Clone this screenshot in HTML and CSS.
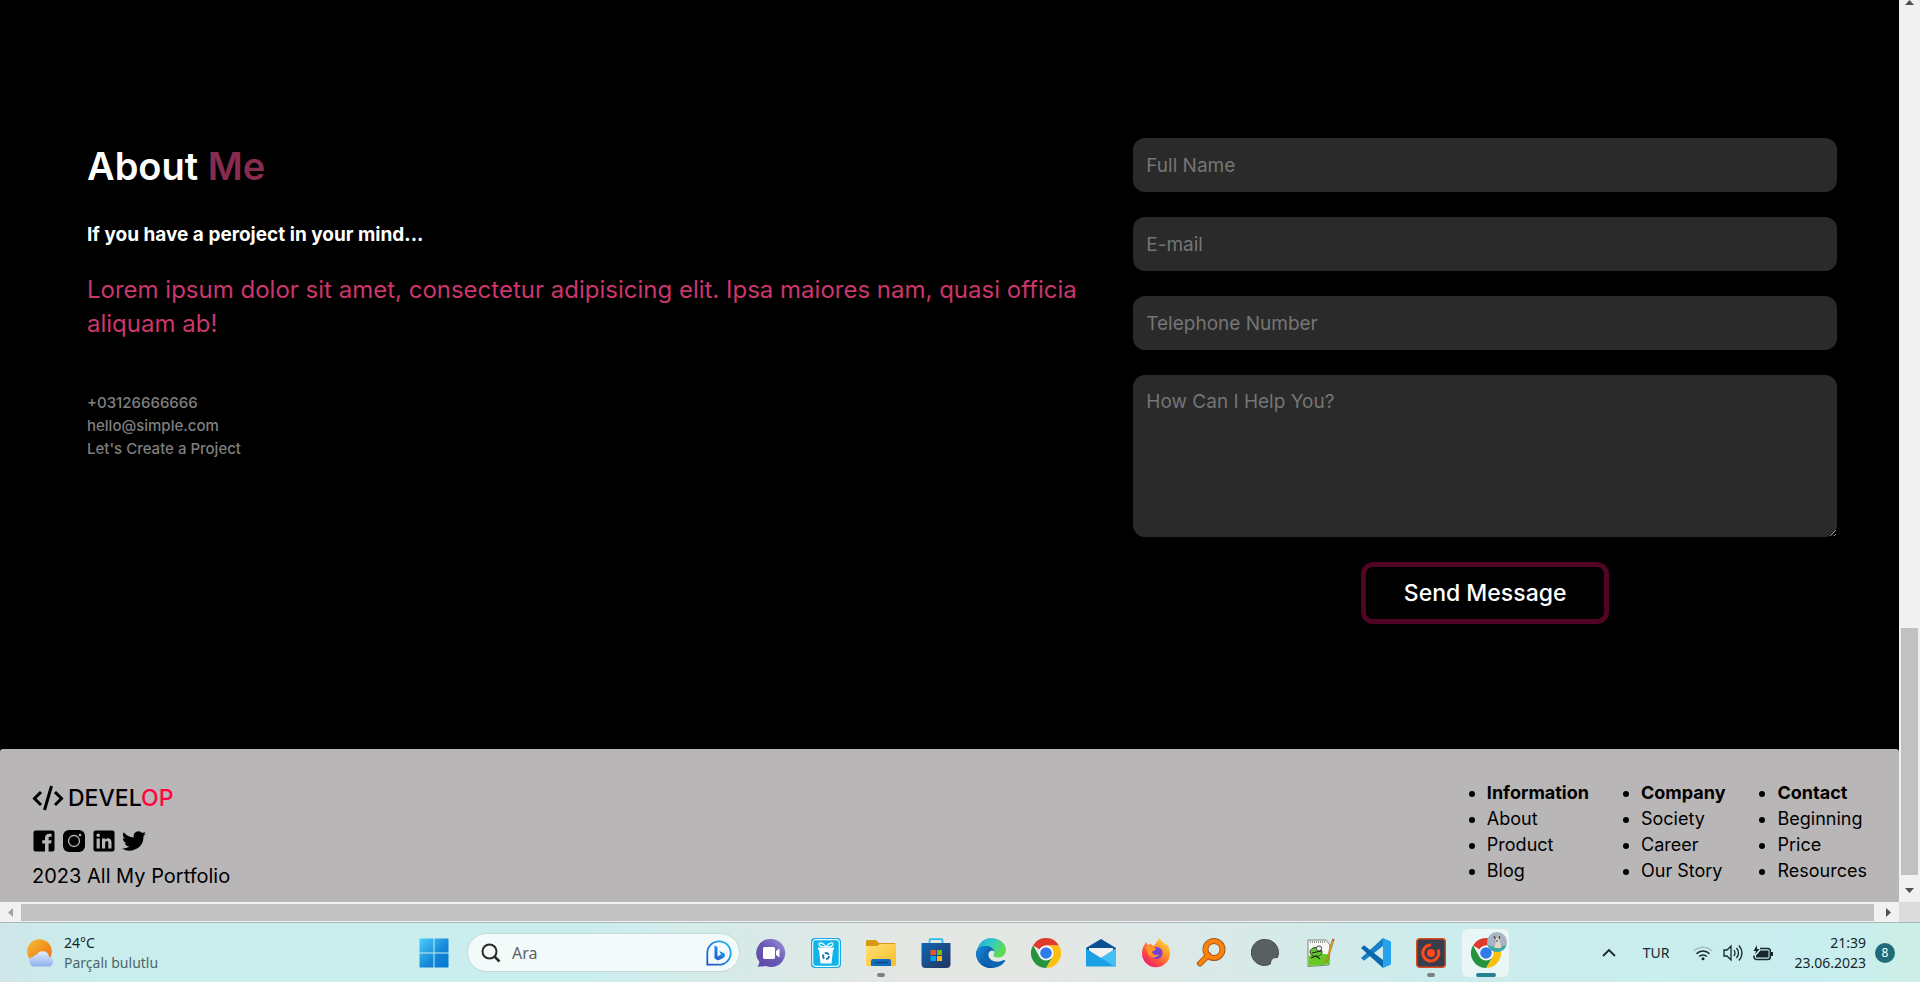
FILE: index.html
```html
<!DOCTYPE html>
<html lang="en">
<head>
<meta charset="utf-8">
<title>Develop Portfolio</title>
<link rel="stylesheet" href="styles.css">
</head>
<body>
<div class="browser">
  <div class="page">
    <main class="contact">
      <section class="about">
        <h1>About <span>Me</span></h1>
        <h2>If you have a peroject in your mind...</h2>
        <p class="lead">Lorem ipsum dolor sit amet, consectetur adipisicing elit. Ipsa maiores nam, quasi officia aliquam ab!</p>
        <div class="details">
          <p>+03126666666</p>
          <p>hello@simple.com</p>
          <p>Let's Create a Project</p>
        </div>
      </section>
      <form class="form">
        <input type="text" placeholder="Full Name" aria-label="Full Name">
        <input type="email" placeholder="E-mail" aria-label="E-mail">
        <input type="tel" placeholder="Telephone Number" aria-label="Telephone Number">
        <textarea placeholder="How Can I Help You?" aria-label="How Can I Help You?"></textarea>
        <button type="button">Send Message</button>
      </form>
    </main>
    <footer class="footer">
      <div class="brand">
        <a class="logo" href="#">
          <svg width="32" height="26" viewBox="0 0 32 26" fill="none" stroke="#000" stroke-width="3"><path d="M9 7 2.500 13.500 9 20M23 7l6.500 6.500L23 20M19.500 1 12.500 25"/></svg>
          <span>DEVEL<b>OP</b></span>
        </a>
        <div class="social">
          <a href="#" aria-label="Facebook"><svg width="24" height="24" viewBox="0 0 24 24"><path fill-rule="evenodd" d="M3.500 1.500h17a2 2 0 0 1 2 2v17a2 2 0 0 1-2 2h-17a2 2 0 0 1-2-2v-17a2 2 0 0 1 2-2Zm9.500 21h3.600v-8h2.500l.5-3.300h-3V9.300c0-1 .4-1.500 1.600-1.500h1.500V4.900c-3.900-.7-6.700.3-6.700 4v2.300h-2.800v3.300H13Z"/></svg></a>
          <a href="#" aria-label="Instagram"><svg width="24" height="24" viewBox="0 0 24 24"><rect x="1" y="1" width="22" height="22" rx="6"/><circle cx="12" cy="12" r="5.500" fill="none" stroke="#b8b6b7" stroke-width="1.300"/><circle cx="18" cy="6" r="1.300" fill="#b8b6b7"/></svg></a>
          <a href="#" aria-label="LinkedIn"><svg width="24" height="24" viewBox="0 0 24 24"><rect x="1.500" y="1.500" width="21" height="21" rx="2"/><g fill="#b8b6b7"><circle cx="6.200" cy="6.200" r="1.800"/><path d="M4.600 9.500h3.200v10H4.600zM10 9.500h3v1.300c2-2.500 6.500-2 6.500 2.600v6.100h-3.200v-5.500c0-2.700-3.100-2.600-3.100 0v5.500H10z"/></g></svg></a>
          <a href="#" aria-label="Twitter"><svg width="24" height="24" viewBox="0 0 24 24"><path d="M24 4.600a10 10 0 0 1-2.800.8 5 5 0 0 0 2.200-2.700 10 10 0 0 1-3.200 1.200 4.900 4.900 0 0 0-8.400 4.500A14 14 0 0 1 1.700 3.200a4.900 4.900 0 0 0 1.500 6.500 4.900 4.900 0 0 1-2.200-.6 4.900 4.900 0 0 0 3.900 4.900 5 5 0 0 1-2.200.1 4.900 4.900 0 0 0 4.600 3.400A9.900 9.900 0 0 1 0 19.500 14 14 0 0 0 21.500 7a10 10 0 0 0 2.500-2.400Z"/></svg></a>
        </div>
        <p>2023 All My Portfolio</p>
      </div>
      <nav class="links">
        <ul><li><strong>Information</strong></li><li>About</li><li>Product</li><li>Blog</li></ul>
        <ul><li><strong>Company</strong></li><li>Society</li><li>Career</li><li>Our Story</li></ul>
        <ul><li><strong>Contact</strong></li><li>Beginning</li><li>Price</li><li>Resources</li></ul>
      </nav>
    </footer>
  </div>
  <div class="vscroll">
    <svg class="up" width="21" height="12" viewBox="0 0 21 12"><path d="M6 5h9l-4.500-5z" fill="#505050"/></svg>
    <div class="thumb"></div>
    <svg class="down" width="21" height="27" viewBox="0 0 21 27"><path d="M6 13h9l-4.500 5z" fill="#505050"/></svg>
  </div>
  <div class="hscroll">
    <svg width="21" height="20" viewBox="0 0 21 20"><path d="M13 6v9l-5-4.500z" fill="#a3a3a3"/></svg>
    <div class="thumb"></div>
    <svg width="25" height="20" viewBox="0 0 25 20"><path d="M12 6v9l5-4.500z" fill="#505050"/></svg>
  </div>
  <div class="corner"></div>
</div>
<div class="taskbar">
  <div class="weather">
    <svg width="28" height="28" viewBox="0 0 28 28"><defs><linearGradient id="sun" x1="0" y1="0" x2="1" y2="1"><stop stop-color="#f5bd30"/><stop offset="1" stop-color="#ee6a12"/></linearGradient><linearGradient id="cloud" x1="0" y1="0" x2="0" y2="1"><stop stop-color="#e2ecfb"/><stop offset="1" stop-color="#8fb0ef"/></linearGradient></defs><circle cx="12.500" cy="12.500" r="12.300" fill="url(#sun)"/><path d="M7 27.500a5 5 0 0 1-.4-9.900 4 4 0 0 1 3.300-2 6.500 6.500 0 0 1 12.200 2.500 5 5 0 0 1 .9 9.400Z" fill="url(#cloud)"/></svg>
    <div><div>24°C</div><div class="dim">Parçalı bulutlu</div></div>
  </div>
  <div class="apps">
    <button class="start" aria-label="Start"><svg width="30" height="30" viewBox="0 0 30 30"><defs><linearGradient id="win" x1="0" y1="0" x2="1" y2="1" ><stop stop-color="#4ed0fc"/><stop offset=".6" stop-color="#1285d6"/><stop offset="1" stop-color="#0078d4"/></linearGradient><mask id="panes"><path fill="#fff" d="M.500.500h14v14H.500zM15.500.500h14v14h-14zM.500 15.500h14v14H.500zM15.500 15.500h14v14h-14z"/></mask></defs><rect width="30" height="30" rx="1.500" fill="url(#win)" mask="url(#panes)"/></svg></button>
    <label class="search">
      <svg width="20" height="20" viewBox="0 0 20 20" fill="none" stroke="#2a2a2a" stroke-width="2"><circle cx="8.500" cy="8.500" r="7"/><path d="m13.500 13.500 5 5" stroke-width="2.500"/></svg>
      <input type="text" placeholder="Ara" aria-label="Ara">
      <svg width="26" height="26" viewBox="0 0 26 26"><defs><linearGradient id="bing" x1="1" y1="0" x2="0" y2="1"><stop stop-color="#22b8f0"/><stop offset="1" stop-color="#2150c8"/></linearGradient></defs><path d="M1.300 24.700V13A11.700 11.700 0 1 1 13 24.700Z" fill="#f3fbff" stroke="url(#bing)" stroke-width="1.800"/><path d="m8.500 5.500 3 1.500v9.500l3.500-2-1.700-3.500 5 2.300c1.500 1.500.8 3.500-1 4.700L12 20.500l-3.500-2.200z" fill="url(#bing)"/></svg>
    </label>
    <button class="app" aria-label="Chat"><svg width="30" height="30" viewBox="0 0 30 30"><defs><linearGradient id="chat" x1="1" y1="0" x2="0" y2="1"><stop stop-color="#a392d8"/><stop offset=".5" stop-color="#6758b4"/><stop offset="1" stop-color="#5c49a8"/></linearGradient></defs><path d="M15 1a14 14 0 1 1-5 27l-8.500.8c1-1.500 1.700-2.800 1.900-5A14 14 0 0 1 15 1Z" fill="url(#chat)"/><rect x="7" y="9" width="12" height="12" rx="1.500" fill="#fff"/><path d="m20 13 3.500-2.500v9L20 17z" fill="#fff"/></svg></button>
    <button class="app" aria-label="Uninstaller"><svg width="30" height="30" viewBox="0 0 30 30"><rect width="30" height="30" rx="4" fill="#18a9e8"/><rect x="1.700" y="1.700" width="26.600" height="26.600" rx="3" fill="#10b4e9" stroke="#e9faff" stroke-width="1.200"/><path d="M7 9.500h16v2.300h-1L20.500 25.500h-11L8 11.800H7z" fill="#fff"/><path d="M15 9C12 4 7 4 8 6.500S12 9 15 9c3 0 6 0 7-2.500S18 4 15 9Z" fill="none" stroke="#fff" stroke-width="1.200"/><circle cx="15" cy="18" r="3" fill="none" stroke="#0f75b5" stroke-width="1.800" stroke-dasharray="4.500 1.800"/></svg></button>
    <button class="app running" aria-label="File Explorer"><svg width="30" height="30" viewBox="0 0 30 30"><defs><linearGradient id="folder" x1="0" y1="0" x2="1" y2="1"><stop stop-color="#ffe07a"/><stop offset="1" stop-color="#f9bd22"/></linearGradient></defs><path d="M0 3.500A1.500 1.500 0 0 1 1.500 2H10l3 3h15a2 2 0 0 1 2 2v8H0z" fill="#d89a10"/><path d="M0 8h11l3-2h16v20.500a1.500 1.500 0 0 1-1.500 1.500h-27A1.500 1.500 0 0 1 0 26.500z" fill="url(#folder)"/><path d="M5 28v-5a2 2 0 0 1 2-2h16a2 2 0 0 1 2 2v5z" fill="#126bbd"/><path d="M9 24.500h13" stroke="#0b4683" stroke-width="1.300"/></svg></button>
    <button class="app" aria-label="Store"><svg width="30" height="30" viewBox="0 0 30 30"><defs><linearGradient id="store" x1="0" y1="0" x2="1" y2="1"><stop stop-color="#0e67b4"/><stop offset="1" stop-color="#24345f"/></linearGradient></defs><path d="M8.500 6V2.200a1 1 0 0 1 1-1h11a1 1 0 0 1 1 1V6" fill="none" stroke="#2cb9ee" stroke-width="1.800"/><path d="M.500 5h29v21a4 4 0 0 1-4 4h-21a4 4 0 0 1-4-4z" fill="url(#store)"/><path d="M9.500 12H15v5H9.500z" fill="#f25022"/><path d="M16 12h5v5h-5z" fill="#7fba00"/><path d="M9.500 18H15v5H9.500z" fill="#00a4ef"/><path d="M16 18h5v5h-5z" fill="#ffb900"/></svg></button>
    <button class="app" aria-label="Edge"><svg width="30" height="30" viewBox="0 0 30 30"><defs><linearGradient id="edge" x1="0" y1="0" x2="1" y2=".5"><stop stop-color="#1ba4df"/><stop offset=".5" stop-color="#34c9c5"/><stop offset="1" stop-color="#62dd4a"/></linearGradient><linearGradient id="edgeb" x1="0" y1="0" x2="1" y2="1"><stop stop-color="#168ad8"/><stop offset="1" stop-color="#0c4b96"/></linearGradient></defs><path d="M1 12C3 4 9 0 15 0c9 0 15 6 15 12 0 5-4 7.500-8 7.500-3.500 0-5-1.200-4.500-2.500 2-3 .3-7-5-7.500-4.500-.4-9 .5-11.500 2.500Z" fill="url(#edge)"/><path d="M0 15c.5-4.500 5-7 9.500-7 5 0 8.500 2.500 9 6-1-1.500-3-2-4.500-.8-3.500 3-1 9.300 5.500 10.300 3.500.5 6.500-.5 8.800-1.500.8-.3 1.200.2.800 1C26.500 27.500 21 30 15 30 6 30 0 23 0 15Z" fill="#0e64b5"/><path d="M0 15c.5-4.500 5-7 9.500-7 3 0 5.500 1 7 2.500-4-1-8 1.500-8.300 6.500-.3 6 4 11.500 9.300 12.800C7 31 0 24 0 15Z" fill="url(#edgeb)"/></svg></button>
    <button class="app" aria-label="Chrome"><svg width="30" height="30" viewBox="0 0 30 30"><g id="chrome"><path d="M15 15 2 7.500A15 15 0 0 1 28 7.500H15Z" fill="#e13b2d"/><path d="M15 15 15 7.500H28A15 15 0 0 1 15 30l6.500-11.300Z" fill="#fdc010"/><path d="M15 15 21.500 18.700 15 30A15 15 0 0 1 2 7.500L8.500 18.700Z" fill="#26933f"/><circle cx="15" cy="15" r="7.500" fill="#fff"/><circle cx="15" cy="15" r="5.800" fill="#2f7bea"/></g></svg></button>
    <button class="app" aria-label="Mail"><svg width="30" height="30" viewBox="0 0 30 30"><path d="M0 10 15 1l15 9v5H0z" fill="#0b4f92"/><path d="M3 10h24v9H3z" fill="#f1f1f1"/><path d="M0 10.500 15 20l15-9.500V27.500a1 1 0 0 1-1 1H1a1 1 0 0 1-1-1z" fill="#1ba0e6"/><path d="M30 10.500 15 20l13.500 8.500H29a1 1 0 0 0 1-1z" fill="#44c0f4"/></svg></button>
    <button class="app" aria-label="Firefox"><svg width="30" height="30" viewBox="0 0 30 30"><defs><linearGradient id="fox" x1="1" y1="0" x2=".2" y2="1"><stop stop-color="#fff04a"/><stop offset=".4" stop-color="#ff9a2a"/><stop offset=".75" stop-color="#ff4545"/><stop offset="1" stop-color="#e31a78"/></linearGradient></defs><path d="M18 0c2 3 5 4.500 6 7l1-2c3 3.500 4 7 4 10.500A14 14 0 0 1 1 15C1 11 2.500 8 4 6l1-2 2 3 3-1 2 2c2-1 4-4 6-8Z" fill="url(#fox)"/><circle cx="15.500" cy="15" r="6" fill="#7542d8"/><path d="M4 9c2-2 4-1.500 6 0 3-.5 5 1 5 2-1 2-4 2-4 3 1 3 4 4 7 2-1 4-9 5-11 0z" fill="#ff9527"/></svg></button>
    <button class="app" aria-label="Search tool"><svg width="30" height="30" viewBox="0 0 30 30" fill="none" stroke-linecap="round"><path d="M12.500 17 4 25.500" stroke="#9a5b22" stroke-width="6"/><circle cx="18" cy="11.500" r="8.500" stroke="#9a5b22" stroke-width="6"/><path d="M12.500 17 4 25.500" stroke="#ff8208" stroke-width="4"/><circle cx="18" cy="11.500" r="8.500" stroke="#ff8208" stroke-width="4.200"/></svg></button>
    <button class="app" aria-label="Disc"><svg width="30" height="30" viewBox="0 0 30 30"><path d="M14.500 1.500a13 13 0 0 1 13 13c0 2-.4 3.700-1.200 5.200-4.200-.7-7 2-6.800 6.200A13 13 0 1 1 14.500 1.500Z" fill="#596060" stroke="#464c4c"/></svg></button>
    <button class="app" aria-label="Notepad++"><svg width="30" height="30" viewBox="0 0 30 30"><path d="M2 2h18l4 5-1 20-21 1.500z" fill="#f7faf3" stroke="#7b827c"/><path d="M2.500 18q10-4 21-1l-.5 9.500-20.500 1.500z" fill="#67c922"/><path d="M4 4h15" stroke="#777" stroke-width="1.500" stroke-dasharray="1 1"/><ellipse cx="10" cy="14" rx="6" ry="4.500" fill="#62c832" stroke="#25471e"/><circle cx="13" cy="10.500" r="2.600" fill="#eee" stroke="#444"/><path d="m5 20 5-2 4 3M6 15l9-2" fill="none" stroke="#222" stroke-width="1.200"/><path d="m20 23 6-21 2 .7-6.500 20-2 2z" fill="#f0a52d" stroke="#895819" stroke-width=".5"/><path d="m26 2 .5-1.500 2 .7-.5 1.500z" fill="#c44"/></svg></button>
    <button class="app" aria-label="VS Code"><svg width="30" height="30" viewBox="0 0 30 30"><path d="M22 0 0 20l3 2.700L22 8z" fill="#1580c7"/><path d="M22 30 0 10l3-2.700L22 22z" fill="#0a69ad"/><path d="m22 0 7 3a1.500 1.500 0 0 1 1 1.500v21a1.500 1.500 0 0 1-1 1.500l-7 3z" fill="#27a1ec"/></svg></button>
    <button class="app running" aria-label="Recorder"><svg width="30" height="30" viewBox="0 0 30 30"><rect x=".7" y=".7" width="28.600" height="28.600" rx="3" fill="#383c4b" stroke="#dc4a20" stroke-width="1.400"/><circle cx="15" cy="15" r="4" fill="#ff4a20"/><path d="M15 7a8 8 0 1 0 7 4.500" fill="none" stroke="#ff4a20" stroke-width="3"/></svg></button>
    <button class="app active" aria-label="Chrome window"><svg width="36" height="36" viewBox="0 0 36 36"><use href="#chrome" x="0" y="6"/><circle cx="26" cy="10" r="10" fill="#a9b3c3"/><path d="M16.500 13q9 4 19 0A10 10 0 0 1 16.500 13Z" fill="#41a9a5"/><path d="m22 3 2.500 3h2L29 3l-.5 5 2 8h-7l1.500-7z" fill="#e2d8c5"/><path d="m23 4 1.500 3m3.500 0 .7-3M25 9h2" stroke="#3d3b39" stroke-width="1.200"/></svg></button>
  </div>
  <div class="tray">
    <svg width="14" height="9" viewBox="0 0 14 9" fill="none" stroke="#16262a" stroke-width="1.800"><path d="m1 8 6-6 6 6"/></svg>
    <span class="lang">TUR</span>
    <div class="status">
      <svg width="20" height="16" viewBox="0 0 20 16" fill="none" stroke="#16262a" stroke-width="1.500"><path d="M1 6a12.500 12.500 0 0 1 18 0" stroke="#a6bfc0"/><path d="M3.500 8.700a9 9 0 0 1 13 0M6.200 11.500a5.300 5.300 0 0 1 7.600 0"/><circle cx="10" cy="13.800" r="1.500" fill="#16262a" stroke="none"/></svg>
      <svg width="20" height="18" viewBox="0 0 20 18" fill="none" stroke="#16262a" stroke-width="1.300"><path d="M1 6h3l4-4v14l-4-4H1zM11 6q2 3 0 6M13.500 4q4 5 0 10M16 1.500q6 7.500 0 15"/></svg>
      <svg width="20" height="16" viewBox="0 0 20 16"><path d="M7 3.500h8A2.500 2.500 0 0 1 17.300 6v6a2.500 2.500 0 0 1-2.500 2.500H3.500A2.500 2.500 0 0 1 1 12v-1.500" fill="none" stroke="#16262a" stroke-width="1.500"/><path d="M7.500 5.500h8v7H3v-2zM18 7h2v4h-2zM4 0 .500 6H3L2 9.500 6.500 4H4z" fill="#16262a"/></svg>
    </div>
    <div class="clock"><div>21:39</div><div>23.06.2023</div></div>
    <span class="count">8</span>
  </div>
</div>
</body>
</html>
```
FILE: styles.css
```css
* { box-sizing: border-box; }
body {
  margin: 0;
  min-height: 100vh;
  display: flex;
  flex-direction: column;
  font-family: Inter, "Noto Sans", sans-serif;
  background: #000;
}
h1, h2, p, ul { margin: 0; padding: 0; }
svg { display: block; flex: none; }
button { font-family: inherit; cursor: pointer; }

.browser {
  flex: 1;
  display: grid;
  grid-template-columns: 1fr 21px;
  grid-template-rows: 1fr 20px;
}
.page { display: flex; flex-direction: column; background: #000; }

.contact {
  flex: 1;
  display: grid;
  grid-template-columns: 142fr 100fr;
  column-gap: 47px;
  align-items: start;
  padding: 138px 62px 120px 87px;
}
.about h1 { font-size: 38px; line-height: 56px; font-weight: 600; color: #fff; }
.about h1 span { color: #872c4f; }
.about h2 { margin-top: 26px; font-size: 19px; line-height: 30px; font-weight: 700; color: #fff; }
.lead { margin-top: 23px; font-size: 24px; line-height: 34px; color: #cb366c; }
.details { margin-top: 50px; font-size: 15px; line-height: 23px; font-weight: 500; color: #7f7f7f; }

.form { display: flex; flex-direction: column; gap: 25px; }
.form input, .form textarea {
  width: 100%;
  padding: 0 13px;
  border: 0;
  border-radius: 12px;
  background: #2a2a2a;
  color: #fff;
  font: 19px/30px Inter, sans-serif;
}
.form input { height: 54px; }
.form textarea { display: block; height: 162px; padding-top: 12px; resize: both; }
.form ::placeholder { color: #757575; }
.form button {
  align-self: center;
  padding: 11px 38px;
  border: 5px solid #4f0523;
  border-radius: 12px;
  background: #000;
  color: #fff;
  font-size: 23px;
  line-height: 30px;
  font-weight: 500;
}

.footer {
  display: flex;
  justify-content: space-between;
  padding: 31px 32px 11px;
  border-radius: 3px 3px 0 0;
  background: #b8b6b7;
  color: #000;
}
.logo {
  display: flex;
  align-items: center;
  gap: 4px;
  color: #000;
  font-size: 23px;
  line-height: 36px;
  font-weight: 500;
  text-decoration: none;
}
.logo b { font-weight: 500; color: #ff0540; }
.social { display: flex; gap: 6px; margin: 13px 0 8px; }
.social a { color: #000; }
.brand p { font-size: 20px; line-height: 30px; }
.links { display: flex; gap: 52px; font-size: 18px; line-height: 26px; }

.vscroll {
  display: grid;
  grid-template-rows: 12px 249fr 100fr 27px;
  background: #f1f1f1;
}
.vscroll .thumb { grid-row: 3; margin: 0 2px; background: #c1c1c1; }
.vscroll .down { grid-row: 4; }
.hscroll { display: flex; background: #f1f1f1; }
.hscroll .thumb { flex: 1; margin: 2px 0 1px; background: #c1c1c1; }
.corner { background: #dcdcdc; }

.taskbar {
  display: grid;
  grid-template-columns: 1fr auto 1fr;
  align-items: center;
  height: 60px;
  border-top: 1px solid #a9b8ba;
  background: linear-gradient(90deg, #d0e6e9, #c9eeed 5%, #caeeed 30%, #e4e7e4 47%, #e4e7e4 54%, #cdecec 74%, #c8eeef 96%, #cdeee4);
  color: #16262a;
  font-family: "Noto Sans", sans-serif;
  font-size: 14px;
  line-height: 20px;
}
.weather { display: flex; align-items: center; gap: 9px; padding-left: 27px; }
.weather .dim { color: #4d6568; }
.apps { display: flex; align-items: center; padding-left: 3px; }
.apps button {
  display: flex;
  align-items: center;
  justify-content: center;
  height: 48px;
  padding: 0;
  border: 0;
  background: none;
}
.apps .start { width: 48px; }
.search {
  display: flex;
  align-items: center;
  width: 273px;
  height: 39px;
  margin: 0 3px 0 9px;
  padding: 0 7px 0 13px;
  border: 1px solid #c5d8d8;
  border-radius: 20px;
  background: #f2fafa;
}
.search input {
  flex: 1;
  min-width: 0;
  padding: 0 11px;
  border: 0;
  background: none;
  font: 16px/24px "Noto Sans", sans-serif;
}
.search input::placeholder { color: #5d6363; }
.apps .app { position: relative; width: 47px; margin: 0 4px; border-radius: 6px; }
.apps .running::after, .apps .active::after {
  content: "";
  position: absolute;
  bottom: 0;
  left: 50%;
  width: 8px;
  height: 4px;
  margin-left: -4px;
  border-radius: 2px;
  background: #7c8482;
}
.apps .active { background: #e8f6f6; box-shadow: 0 0 1px 1px #d4e9e9; padding: 0 0 6px 6px; }
.apps .active::after { width: 20px; margin-left: -10px; background: #23838f; }

.tray { display: flex; align-items: center; justify-content: flex-end; padding-right: 25px; }
.lang { margin: 0 24px 0 27px; }
.status { display: flex; align-items: center; gap: 10px; }
.clock { margin: 0 9px 0 21px; text-align: right; }
.count {
  width: 20px;
  height: 20px;
  border-radius: 50%;
  background: #1f6b78;
  color: #fff;
  font-size: 12px;
  text-align: center;
}
```
